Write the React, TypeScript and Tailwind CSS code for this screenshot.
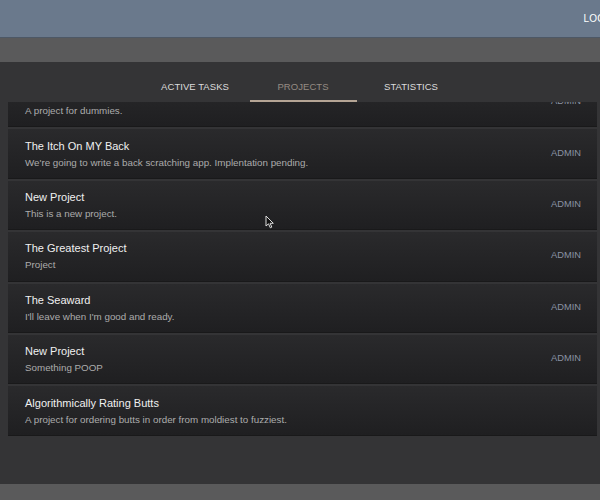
import React from "react";

const projects = [
  { title: "A Project", desc: "A project for dummies.", admin: true },
  { title: "The Itch On MY Back", desc: "We're going to write a back scratching app. Implentation pending.", admin: true },
  { title: "New Project", desc: "This is a new project.", admin: true },
  { title: "The Greatest Project", desc: "Project", admin: true },
  { title: "The Seaward", desc: "I'll leave when I'm good and ready.", admin: true },
  { title: "New Project", desc: "Something POOP", admin: true },
  { title: "Algorithmically Rating Butts", desc: "A project for ordering butts in order from moldiest to fuzziest.", admin: false },
];

export default function App() {
  return (
    <div
      className="relative w-[600px] h-[500px] overflow-hidden flex flex-col bg-[#333335]"
      style={{ fontFamily: '"Liberation Sans", Arial, sans-serif' }}
    >
      <header className="h-[38px] shrink-0 bg-[#6a798c] border-b border-[#4d5866] flex items-center justify-end">
        <span className="text-[10px] text-white tracking-[0.2px] mr-[-27px]">LOGOUT</span>
      </header>
      <div className="h-[24px] shrink-0 bg-[#5a5a5b]" />
      <div className="flex-1 flex flex-col bg-[#343436] min-h-0">
        <nav className="h-[40px] shrink-0 flex justify-center items-stretch pl-[6px] relative z-10 bg-[#343436]">
          {["ACTIVE TASKS", "PROJECTS", "STATISTICS"].map((t) => (
            <div key={t} className="w-[108px] flex flex-col items-center">
              <div
                className={`flex-1 flex items-end pb-[8px] text-[9.5px] leading-[11px] tracking-[0.05px] ${
                  t === "PROJECTS" ? "text-[#958b83]" : "text-[#dcdcdc]"
                }`}
              >
                {t}
              </div>
              <div className={`h-[2px] w-[107px] ${t === "PROJECTS" ? "bg-[#b5a595]" : "bg-transparent"}`} />
            </div>
          ))}
        </nav>
        <div className="flex-1 overflow-hidden pl-[8px] pr-[3px] relative">
          <div className="flex flex-col gap-[2px] mt-[-24px]">
            {projects.map((p, i) => (
              <div
                key={i}
                className="h-[49.4px] shrink-0 flex items-center justify-between pl-[17px] pr-[16px] bg-gradient-to-b from-[#2a2a2c] to-[#1f1f21] border-b border-[#19191a]"
              >
                <div className="flex flex-col">
                  <div className="text-[11px] leading-[14px] text-[#f0f0f0]">{p.title}</div>
                  <div className="text-[9.8px] leading-[12px] mt-[4px] text-[#acacac]">{p.desc}</div>
                </div>
                {p.admin && <div className="text-[9.3px] text-[#8a93a3]">ADMIN</div>}
              </div>
            ))}
          </div>
        </div>
      </div>
      <div className="h-[16px] shrink-0 bg-[#5a5a5b]" />
      <svg className="absolute left-[265px] top-[215px]" width="10" height="14" viewBox="0 0 10 14">
        <path d="M1 1 L1 11 L3.5 8.8 L5.3 12.8 L6.8 12.1 L5.1 8.3 L8.3 8.3 Z" fill="#111" stroke="#ddd" strokeWidth="1" />
      </svg>
    </div>
  );
}
